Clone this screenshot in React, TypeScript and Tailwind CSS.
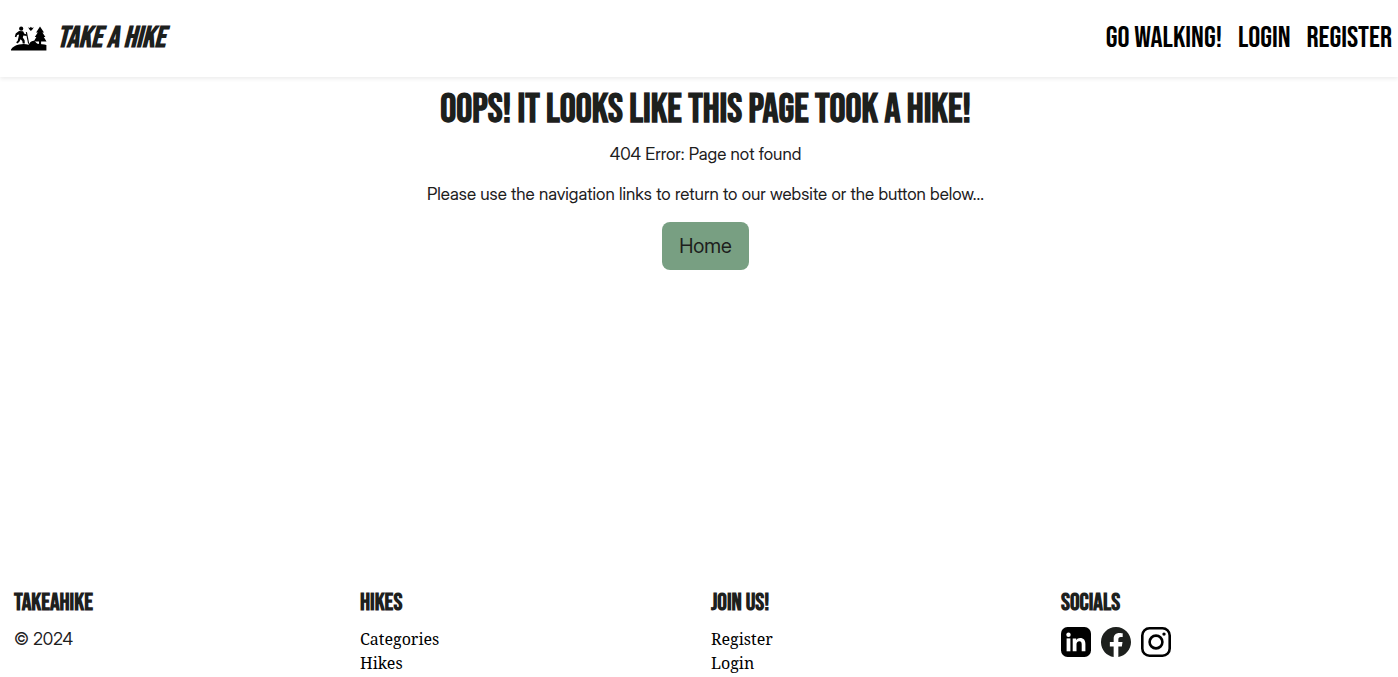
import { BsFacebook } from "react-icons/bs";

const links = ["Go Walking!", "Login", "Register"];

function HikeLogo() {
  return (
    <svg viewBox="0 0 36 26" className="h-[26px] w-9" fill="#000" aria-hidden="true">
      <path d="M0 25.6V24.4C1.5 22.2 4 20.4 8 19.6C11.5 18.6 15 18.8 17.5 19.8C18.5 17.8 20.3 15.8 22.3 15.7C24 15.6 25 17.8 26.5 18.8C29.5 19.2 33 19.4 35.4 20V25.6Z" />
      <circle cx="10.2" cy="3.7" r="2.1" />
      <path d="M8 5.9L12.1 6.3L13.4 8.8L16 9.6L15.7 11.1L12.4 10.4L11.8 12.6L13.6 15.3L13.8 18.6L11.7 18.6L11.3 15.9L9.6 14.3L8.2 17L6.2 18.6L5.2 17.2L6.7 15.8L8.1 9.5L6.2 10.1L5.3 12.3L3.8 11.8L4.7 8.4Z" />
      <path d="M14.8 7.2L15.9 7L18.2 18.6L17.1 18.8Z" />
      <path d="M29 1.6L33 7.4H31.4L34.4 12H32.8L35.5 16.4H30.1V20.5H28V16.4H22.7L25.4 12H23.8L26.8 7.4H25.1Z" />
      <path d="M17.2 2.2L18.8 3L19.9 1.8L21 3L22.8 2.2L21.6 4.3L19.9 6L18.2 4.3Z" />
    </svg>
  );
}

function LinkedInIcon() {
  return (
    <svg viewBox="0 0 30 30" className="size-[30px]" aria-hidden="true">
      <rect width="30" height="30" rx="6.5" fill="#000" />
      <g fill="#fff">
        <circle cx="7.5" cy="7.7" r="2.2" />
        <path d="M5.6 11.4H9.4V24.3H5.6Z" />
        <path d="M11.7 11.4H15.2V13.2C16 11.8 17.4 11.1 19.1 11.1C22.7 11.1 24.4 13.3 24.4 16.9V24.3H20.7V17.6C20.7 15.5 20.1 14.3 18.4 14.3C16.3 14.3 15.5 15.6 15.5 17.6V24.3H11.7Z" />
      </g>
    </svg>
  );
}

function InstagramIcon() {
  return (
    <svg viewBox="0 0 30 30" className="size-[30px]" fill="none" stroke="#000" aria-hidden="true">
      <rect x="1.3" y="1.3" width="27.4" height="27.4" rx="7.2" strokeWidth="2.6" />
      <circle cx="15" cy="15" r="6.4" strokeWidth="2.6" />
      <circle cx="23" cy="7.1" r="1.7" fill="#000" stroke="none" />
    </svg>
  );
}

const columnTitle = "mb-2.5 font-['Bebas_Neue','League_Gothic',sans-serif] text-2xl/7 font-bold uppercase";
const footerLink = "font-['Noto_Serif',serif] text-base/6 text-black";

export default function App() {
  return (
    <div className="flex min-h-screen flex-col bg-white font-['Inter_Display','Inter',sans-serif] text-[17px]/6 text-[#1d201d]">
      <header className="flex h-[77px] shrink-0 items-center justify-between pr-1.5 pb-px pl-[11px] shadow-[0_2px_4px_rgba(0,0,0,0.075)]">
        <a href="#" className="flex items-center gap-2.5 font-['Bebas_Neue','League_Gothic',sans-serif] text-[30px]/10 font-bold italic">
          <HikeLogo />
          Take a Hike
        </a>
        <nav className="flex gap-4 font-['Bebas_Neue','League_Gothic',sans-serif] text-[30px]/10 text-black">
          {links.map((label) => <a key={label} href="#">{label}</a>)}
        </nav>
      </header>
      <main className="flex flex-col items-center pt-[9px] pb-8 pl-[13px] text-center">
        <h1 className="mb-2 font-['Bebas_Neue','League_Gothic',sans-serif] text-[40px]/12 font-bold uppercase">Oops! It looks like this page took a hike!</h1>
        <p className="mb-4">404 Error: Page not found</p>
        <p className="mb-4">Please use the navigation links to return to our website or the button below...</p>
        <a href="#" className="rounded-lg bg-[#789f82] px-[17px] py-[9px] text-xl/[30px]">Home</a>
      </main>
      <footer className="mt-auto grid grid-cols-[346fr_351fr_350fr_337fr] pb-0.5 pl-3.5">
        <section>
          <h2 className={columnTitle}>TakeAHike</h2>
          <p>© 2024</p>
        </section>
        <section>
          <h2 className={columnTitle}>Hikes</h2>
          <ul>
            <li><a href="#" className={footerLink}>Categories</a></li>
            <li><a href="#" className={footerLink}>Hikes</a></li>
          </ul>
        </section>
        <section>
          <h2 className={columnTitle}>Join us!</h2>
          <ul>
            <li><a href="#" className={footerLink}>Register</a></li>
            <li><a href="#" className={footerLink}>Login</a></li>
          </ul>
        </section>
        <section>
          <h2 className={columnTitle}>Socials</h2>
          <div className="flex gap-2.5">
            <a href="#" aria-label="LinkedIn"><LinkedInIcon /></a>
            <a href="#" aria-label="Facebook"><BsFacebook className="size-[30px]" /></a>
            <a href="#" aria-label="Instagram"><InstagramIcon /></a>
          </div>
        </section>
      </footer>
    </div>
  );
}
